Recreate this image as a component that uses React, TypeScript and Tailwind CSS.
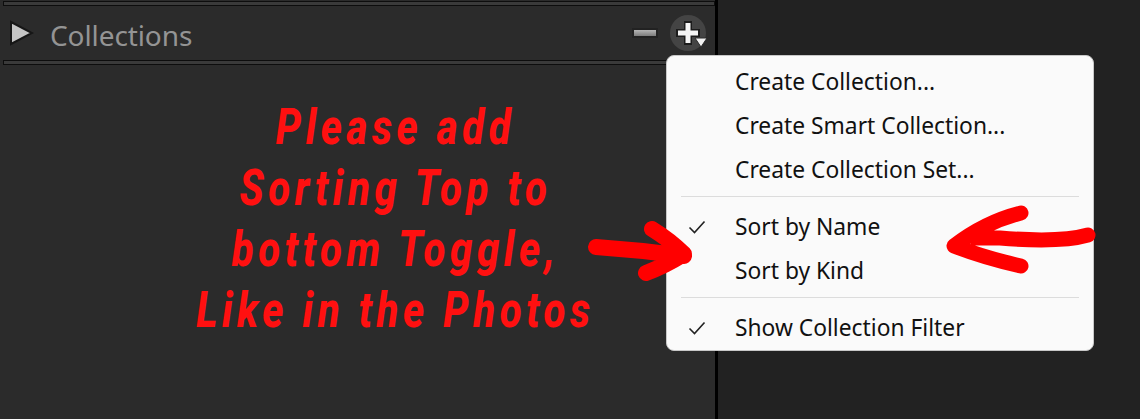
import React from "react";

function Rule() {
  return <div className="h-[5px] ml-[3px] border border-[#0d0d0d] bg-[#3a3a3a]" />;
}

function MenuItem({ label, checked }: { label: string; checked?: boolean }) {
  return (
    <div className="h-11 flex items-center text-[22.8px] text-[#111] relative pl-[68px]">
      {checked && (
        <svg className="absolute left-[21px] top-[14px]" width="18" height="16" viewBox="0 0 18 16" fill="none">
          <path d="M1.5 8.5 L6.5 13.5 L16.5 2.5" stroke="#222" strokeWidth="1.6" />
        </svg>
      )}
      {label}
    </div>
  );
}

export default function App() {
  return (
    <div className="relative w-[1140px] h-[419px] overflow-hidden flex bg-[#222222] font-['Open_Sans',sans-serif]">
      <div className="w-[715px] h-full bg-[#2b2b2b] pt-px">
        <Rule />
        <div className="h-[54px] flex items-center relative">
          <svg className="ml-[9px]" width="25" height="26" viewBox="0 0 25 26">
            <path d="M2 2 L23 13 L2 24 Z" fill="#c4c4c4" stroke="#161616" strokeWidth="2" />
          </svg>
          <span className="ml-[16px] pt-[3px] text-[28px] leading-none text-[#949494] tracking-[-0.1px] font-['Noto_Sans',sans-serif]">Collections</span>
          <div className="ml-auto mr-[9px] flex items-center gap-[14px]">
            <div className="w-[22px] h-[6px] bg-gradient-to-b from-[#b5b5b5] to-[#7d7d7d] outline-[2px] outline-[#222222]" />
            <div className="relative w-9 h-9 rounded-full bg-[#444444]">
              <svg className="absolute left-[5px] top-[5px]" width="26" height="26" viewBox="0 0 26 26">
                <path d="M9 1 H17 V9 H25 V17 H17 V25 H9 V17 H1 V9 H9 Z" fill="#1c1c1c" />
                <path d="M10.5 3 H15.5 V10.5 H23 V15.5 H15.5 V23 H10.5 V15.5 H3 V10.5 H10.5 Z" fill="#f4f4f4" />
              </svg>
              <svg className="absolute left-[24px] top-[22px]" width="14" height="11" viewBox="0 0 14 11">
                <path d="M1 1 H13 L7 10 Z" fill="#f0f0f0" stroke="#2a2a2a" strokeWidth="1" />
              </svg>
            </div>
          </div>
        </div>
        <Rule />
        <div className="mt-[32px] pl-[76px] text-center text-[#ff1010] text-[49px] leading-[61px] font-extrabold italic tracking-[5.6px] font-['Roboto',sans-serif]">
          <div className="scale-x-[0.82]">Please add</div>
          <div className="scale-x-[0.82]">Sorting Top to</div>
          <div className="scale-x-[0.82]">bottom Toggle,</div>
          <div className="scale-x-[0.82]">Like in the Photos</div>
        </div>
      </div>
      <div className="w-[3px] h-full bg-black" />
      <div className="flex-1 bg-[#222222]" />

      <div className="absolute left-[666px] top-[55px] w-[428px] h-[296px] rounded-[8px] bg-[#fafafa] border border-[#c8c8c8] pt-[4px] font-['Noto_Sans',sans-serif]">
        <MenuItem label="Create Collection..." />
        <MenuItem label="Create Smart Collection..." />
        <MenuItem label="Create Collection Set..." />
        <div className="h-px bg-[#dcdcdc] mx-[14px] mt-[4px] mb-[8px]" />
        <MenuItem label="Sort by Name" checked />
        <MenuItem label="Sort by Kind" />
        <div className="h-px bg-[#dcdcdc] mx-[14px] mt-[4px] mb-[8px]" />
        <MenuItem label="Show Collection Filter" checked />
      </div>

      <svg className="absolute left-0 top-0 pointer-events-none" width="1140" height="419" viewBox="0 0 1140 419" fill="none">
        <path d="M596 247 Q640 250 684 256 M652 229 Q670 240 684 254 Q665 266 646 273" stroke="#ff0000" strokeWidth="16" strokeLinecap="round" strokeLinejoin="round" />
        <path d="M1088 235 Q1060 243 1000 238 L975 238 M1021 213 Q985 222 954 246 Q985 258 1021 266" stroke="#ff0000" strokeWidth="15" strokeLinecap="round" strokeLinejoin="round" />
      </svg>
    </div>
  );
}
